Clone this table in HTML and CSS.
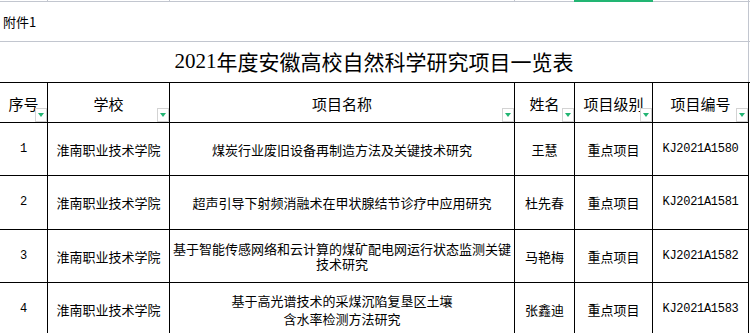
FILE: index.html
```html
<!DOCTYPE html>
<html lang="zh-CN">
<head>
<meta charset="utf-8">
<title>2021年度安徽高校自然科学研究项目一览表</title>
<link rel="stylesheet" href="styles.css">
</head>
<body>
<div class="sheet">
  <div class="strip">
    <div class="sc"></div><div class="sc"></div><div class="sc"></div><div class="sc"></div>
    <div class="sc sel"></div><div class="sc"></div><div class="sc last"></div>
  </div>
  <div class="band attach">
    <div class="merged attach-text">附件1</div>
    <div class="extra"></div>
  </div>
  <div class="band titlerow">
    <div class="merged title"><span class="num">2021</span>年度安徽高校自然科学研究项目一览表</div>
    <div class="extra"></div>
  </div>
  <div class="grid">
    <div class="hd">序号<span class="flt"></span></div>
    <div class="hd">学校<span class="flt"></span></div>
    <div class="hd">项目名称<span class="flt"></span></div>
    <div class="hd">姓名<span class="flt"></span></div>
    <div class="hd">项目级别<span class="flt"></span></div>
    <div class="hd">项目编号<span class="flt"></span></div>
    <div class="ex"></div>

    <div class="td mono">1</div>
    <div class="td">淮南职业技术学院</div>
    <div class="td name">煤炭行业废旧设备再制造方法及关键技术研究</div>
    <div class="td">王慧</div>
    <div class="td">重点项目</div>
    <div class="td mono">KJ2021A1580</div>
    <div class="ex"></div>

    <div class="td mono">2</div>
    <div class="td">淮南职业技术学院</div>
    <div class="td name">超声引导下射频消融术在甲状腺结节诊疗中应用研究</div>
    <div class="td">杜先春</div>
    <div class="td">重点项目</div>
    <div class="td mono">KJ2021A1581</div>
    <div class="ex"></div>

    <div class="td mono">3</div>
    <div class="td">淮南职业技术学院</div>
    <div class="td name">基于智能传感网络和云计算的煤矿配电网运行状态监测关键技术研究</div>
    <div class="td">马艳梅</div>
    <div class="td">重点项目</div>
    <div class="td mono">KJ2021A1582</div>
    <div class="ex"></div>

    <div class="td mono">4</div>
    <div class="td">淮南职业技术学院</div>
    <div class="td name loose">基于高光谱技术的采煤沉陷复垦区土壤<br>含水率检测方法研究</div>
    <div class="td">张鑫迪</div>
    <div class="td">重点项目</div>
    <div class="td mono">KJ2021A1583</div>
    <div class="ex"></div>
  </div>
</div>
</body>
</html>
```
FILE: styles.css
```css
* { box-sizing: border-box; }
html, body {
  margin: 0;
  padding: 0;
  background: #ffffff;
  overflow: hidden;
}
body {
  font-family: "Noto Sans CJK SC", "Noto Sans", sans-serif;
  color: #000;
  font-size: 13px;
}
.sheet {
  width: 750px;
  height: 333px;
  overflow: hidden;
}
.strip {
  display: grid;
  grid-template-columns: 48px 122px 345px 60px 78px 96px 1px;
  height: 2px;
  border-bottom: 1px solid #c2c6cf;
  position: relative;
}
.sc {
  border-right: 1px solid #c2c6cf;
  height: 1px;
}
.sc.last { border-right: 0; }
.sel {
  position: relative;
}
.sel::before {
  content: "";
  position: absolute;
  left: -1px;
  right: -1px;
  top: 0;
  height: 2px;
  background: #22b573;
}
.band {
  display: flex;
  width: 750px;
}
.attach {
  height: 40px;
  border-bottom: 1px solid #c2c6cf;
}
.titlerow {
  height: 40px;
}
.merged {
  width: 749px;
  border-right: 1px solid #c2c6cf;
  display: flex;
  align-items: center;
}
.extra { width: 1px; }
.attach-text {
  padding-left: 3px;
  font-size: 13px;
  padding-bottom: 1px;
}
.title {
  justify-content: center;
  font-size: 21px;
  letter-spacing: 0;
  padding-bottom: 2px;
}
.title .num {
  font-family: "Liberation Serif", serif;
}
.grid {
  display: grid;
  grid-template-columns: 48px 122px 345px 60px 78px 96px 1px;
  grid-template-rows: 40px 53px 54px 53px 54px;
  border-top: 1px solid #000;
  width: 750px;
}
.hd, .td {
  border-right: 1px solid #000;
  border-bottom: 1px solid #000;
  display: flex;
  align-items: center;
  justify-content: center;
  text-align: center;
}
.hd {
  font-size: 15px;
  position: relative;
  padding-top: 1px;
}
.td {
  font-size: 13px;
  line-height: 15px;
  padding: 0 2px;
}
.td.loose { line-height: 18px; }
.mono {
  font-family: "Liberation Mono", monospace;
  font-size: 12px;
  letter-spacing: -0.3px;
}
.ex { width: 1px; }
.flt {
  position: absolute;
  right: 0;
  bottom: 0;
  width: 12px;
  height: 14px;
  border: 1px solid #d3d3d3;
  background: #fff;
}
.flt::after {
  content: "";
  position: absolute;
  left: 2px;
  top: 4px;
  width: 0;
  height: 0;
  border-left: 3px solid transparent;
  border-right: 3px solid transparent;
  border-top: 4px solid #22b573;
}
```
